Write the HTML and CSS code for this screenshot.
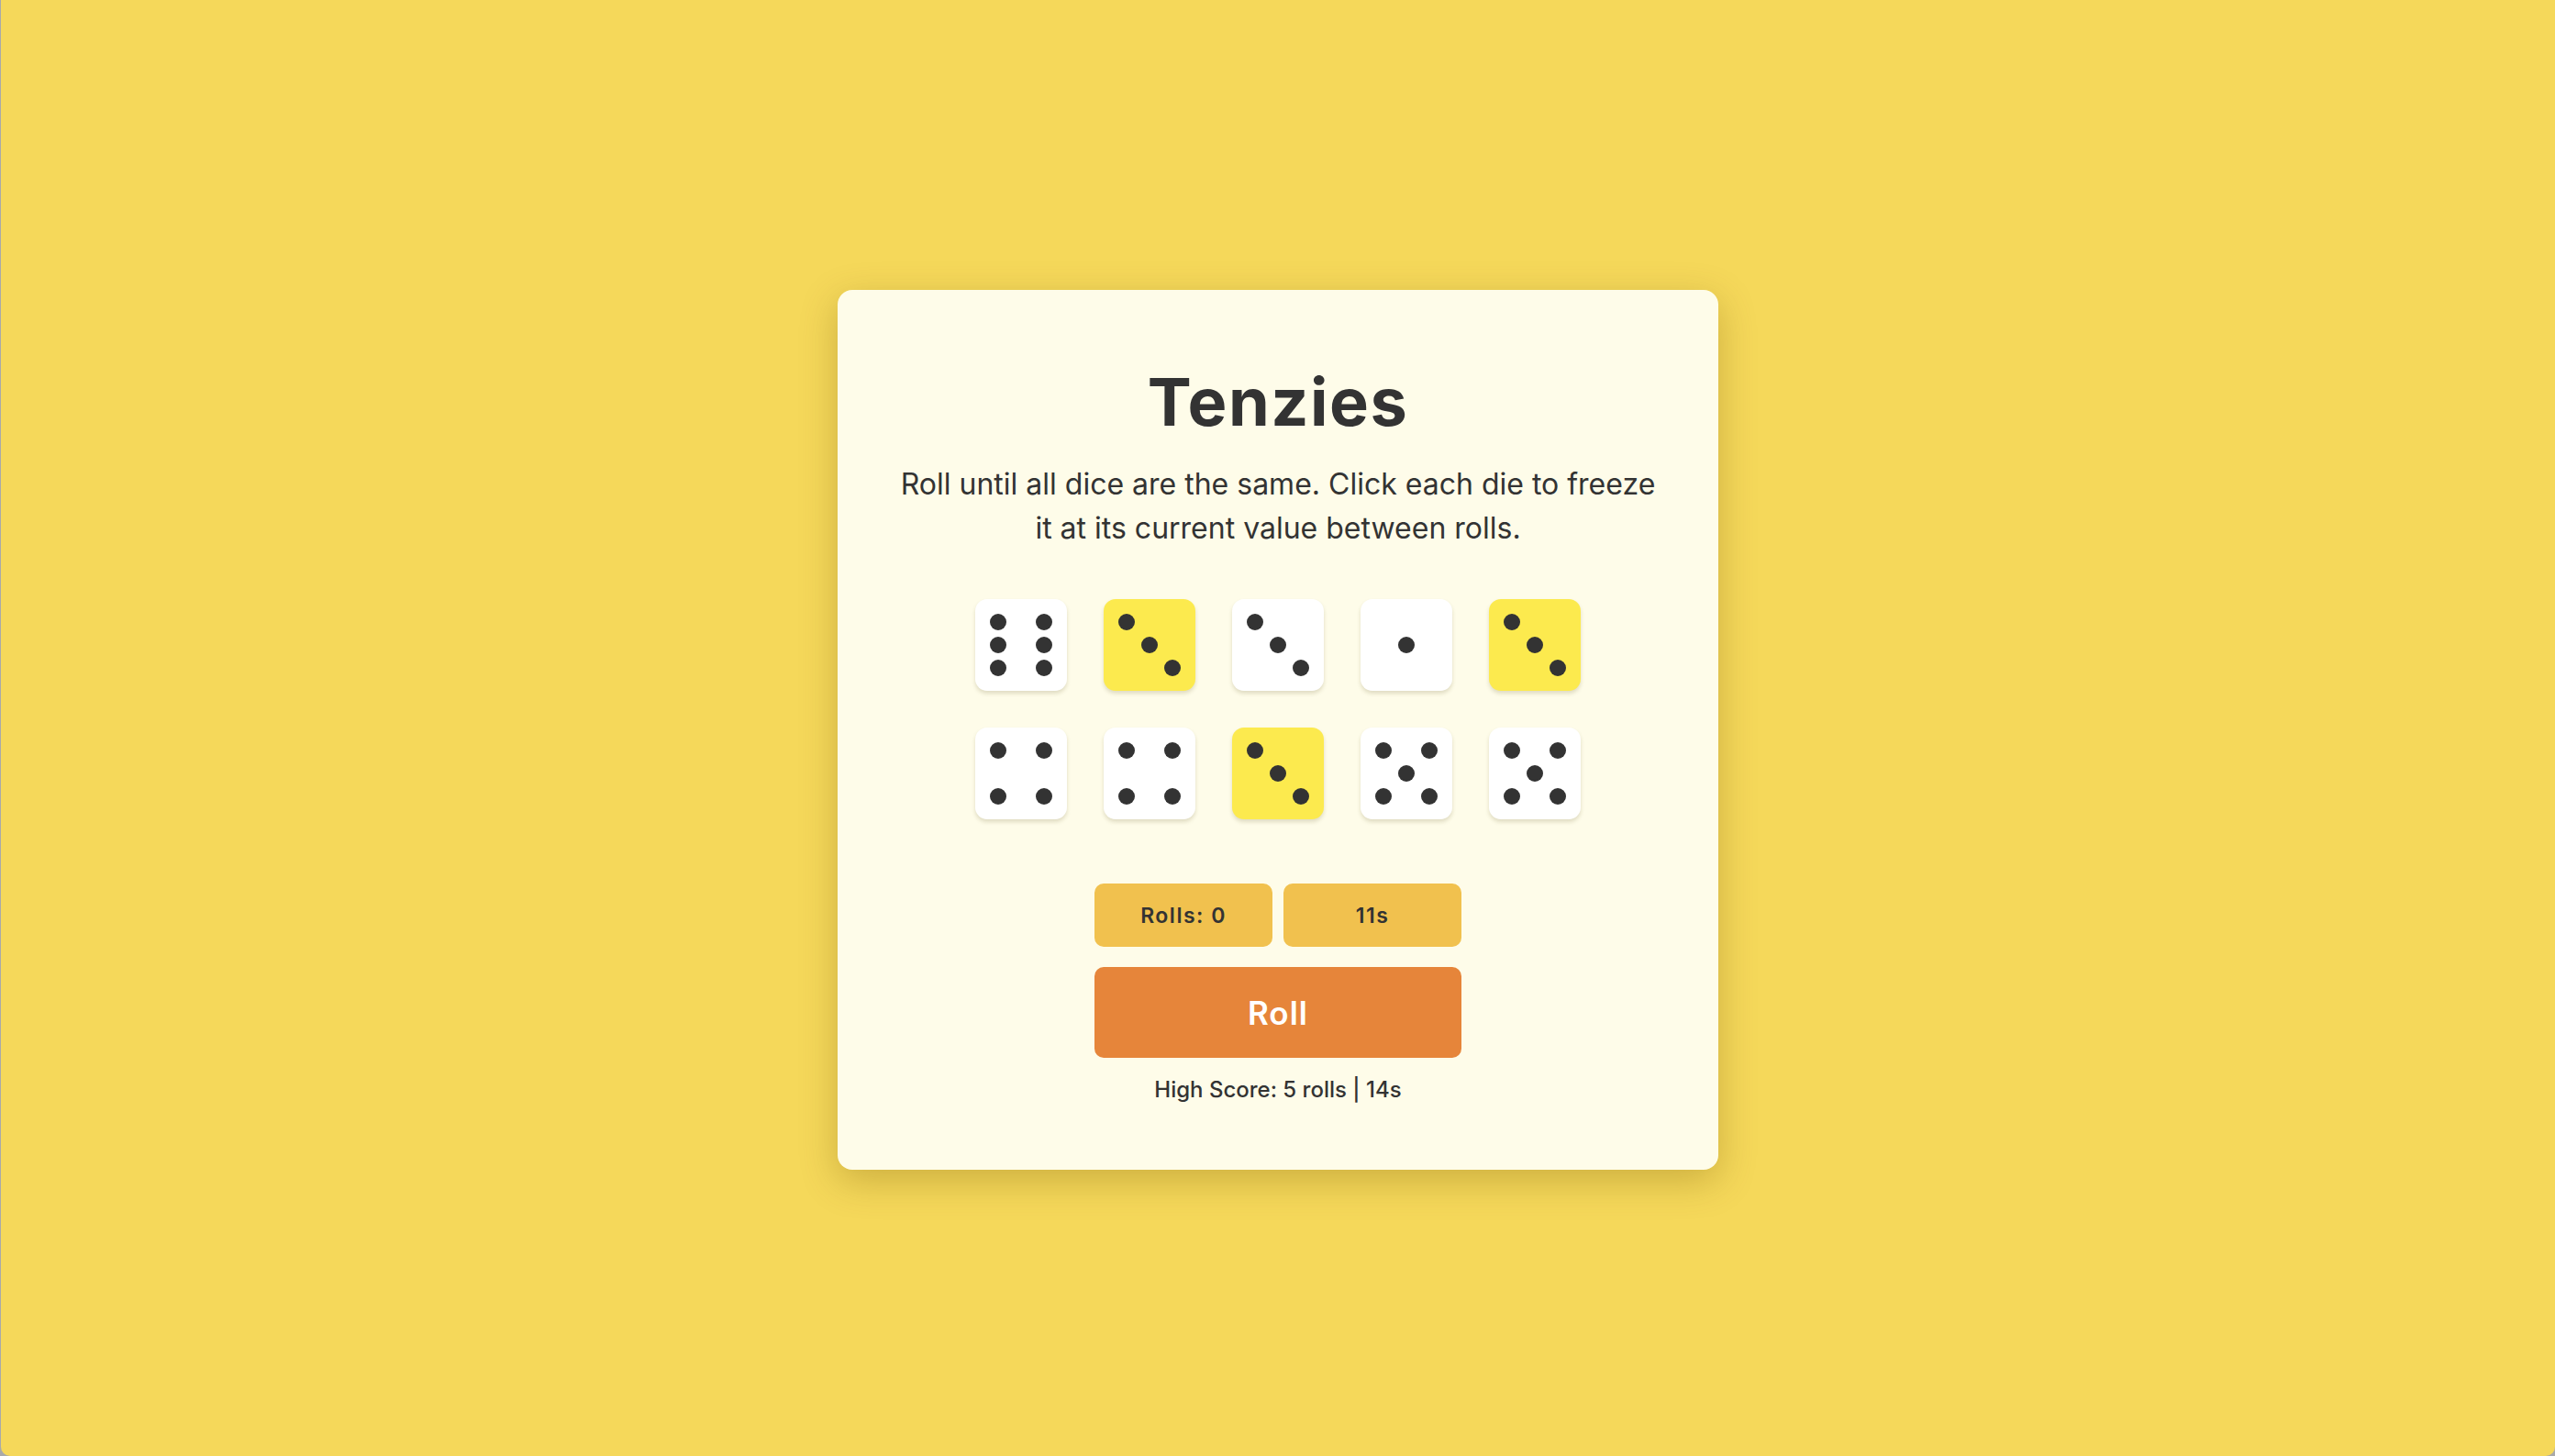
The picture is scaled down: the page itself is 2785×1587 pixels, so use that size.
FILE: index.html
```html
<!DOCTYPE html>
<html lang="en">
<head>
<meta charset="utf-8">
<title>Tenzies</title>
<link rel="stylesheet" href="styles.css">
</head>
<body>
<div class="screen">
  <main class="card">
    <h1 class="title">Tenzies</h1>
    <p class="desc">Roll until all dice are the same. Click each die to freeze it at its current value between rolls.</p>
    <div class="dice">
      <button class="die f6"><i></i><i></i><i></i><i></i><i></i><i></i></button>
      <button class="die f3 held"><i></i><i></i><i></i></button>
      <button class="die f3"><i></i><i></i><i></i></button>
      <button class="die f1"><i></i></button>
      <button class="die f3 held"><i></i><i></i><i></i></button>
      <button class="die f4"><i></i><i></i><i></i><i></i></button>
      <button class="die f4"><i></i><i></i><i></i><i></i></button>
      <button class="die f3 held"><i></i><i></i><i></i></button>
      <button class="die f5"><i></i><i></i><i></i><i></i><i></i></button>
      <button class="die f5"><i></i><i></i><i></i><i></i><i></i></button>
    </div>
    <div class="controls">
      <div class="stats">
        <div class="stat">Rolls: 0</div>
        <div class="stat">11s</div>
      </div>
      <button class="roll">Roll</button>
      <p class="high">High Score: 5 rolls | 14s</p>
    </div>
  </main>
</div>
</body>
</html>
```

FILE: styles.css
```css
html {
  background: #a9a9a9;
}
body {
  margin: 0;
  font-family: Inter, "Noto Sans", sans-serif;
  color: #333333;
}
.screen {
  margin-left: 1px;
  height: 1587px;
  background: #f5d85a;
  border-radius: 0 0 10px 10px;
  display: flex;
  align-items: center;
  justify-content: center;
  padding-top: 4px;
  box-sizing: border-box;
}
.card {
  width: 960px;
  height: 959px;
  box-sizing: border-box;
  background: #fefce9;
  border-radius: 16px;
  box-shadow: 0 12px 40px rgba(110, 80, 0, 0.3);
  padding: 86px 64px 0;
  display: flex;
  flex-direction: column;
  align-items: center;
}
.title {
  margin: 0;
  font-size: 72px;
  line-height: 72px;
  font-weight: 700;
  letter-spacing: 1.5px;
  color: #333333;
}
.desc {
  margin: 30px 0 0;
  max-width: 832px;
  font-size: 32px;
  line-height: 48px;
  text-align: center;
  color: #333333;
}
.dice {
  margin-top: 53px;
  display: grid;
  grid-template-columns: repeat(5, 100px);
  gap: 40px;
}
.die {
  width: 100px;
  height: 100px;
  border: none;
  padding: 0;
  background: #ffffff;
  border-radius: 13px;
  box-shadow: 0 3px 4px rgba(90, 80, 20, 0.18);
  position: relative;
}
.die.held {
  background: #fcea4e;
}
.die i {
  position: absolute;
  width: 18px;
  height: 18px;
  border-radius: 50%;
  background: #333333;
  margin: -9px 0 0 -9px;
}
.f1 i { left: 50%; top: 50%; }
.f3 i:nth-child(1) { left: 25%; top: 25%; }
.f3 i:nth-child(2) { left: 50%; top: 50%; }
.f3 i:nth-child(3) { left: 75%; top: 75%; }
.f4 i:nth-child(1) { left: 25%; top: 25%; }
.f4 i:nth-child(2) { left: 75%; top: 25%; }
.f4 i:nth-child(3) { left: 25%; top: 75%; }
.f4 i:nth-child(4) { left: 75%; top: 75%; }
.f5 i:nth-child(1) { left: 25%; top: 25%; }
.f5 i:nth-child(2) { left: 75%; top: 25%; }
.f5 i:nth-child(3) { left: 50%; top: 50%; }
.f5 i:nth-child(4) { left: 25%; top: 75%; }
.f5 i:nth-child(5) { left: 75%; top: 75%; }
.f6 i:nth-child(1) { left: 25%; top: 25%; }
.f6 i:nth-child(2) { left: 75%; top: 25%; }
.f6 i:nth-child(3) { left: 25%; top: 50%; }
.f6 i:nth-child(4) { left: 75%; top: 50%; }
.f6 i:nth-child(5) { left: 25%; top: 75%; }
.f6 i:nth-child(6) { left: 75%; top: 75%; }
.controls {
  margin-top: 70px;
  width: 400px;
  display: flex;
  flex-direction: column;
  align-items: center;
}
.stats {
  width: 100%;
  display: grid;
  grid-template-columns: 1fr 1fr;
  gap: 12px;
}
.stat {
  height: 69px;
  background: #f1c14e;
  border-radius: 10px;
  display: flex;
  align-items: center;
  justify-content: center;
  font-size: 23px;
  font-weight: 600;
  letter-spacing: 1.5px;
  color: #333333;
}
.roll {
  margin-top: 22px;
  width: 100%;
  height: 99px;
  border: none;
  border-radius: 10px;
  background: #e6853a;
  color: #ffffff;
  font-family: Inter, "Noto Sans", sans-serif;
  font-size: 35px;
  font-weight: 600;
  letter-spacing: 1px;
}
.high {
  margin: 20px 0 0;
  font-size: 24px;
  line-height: 30px;
  font-weight: 500;
  color: #333333;
}
```
